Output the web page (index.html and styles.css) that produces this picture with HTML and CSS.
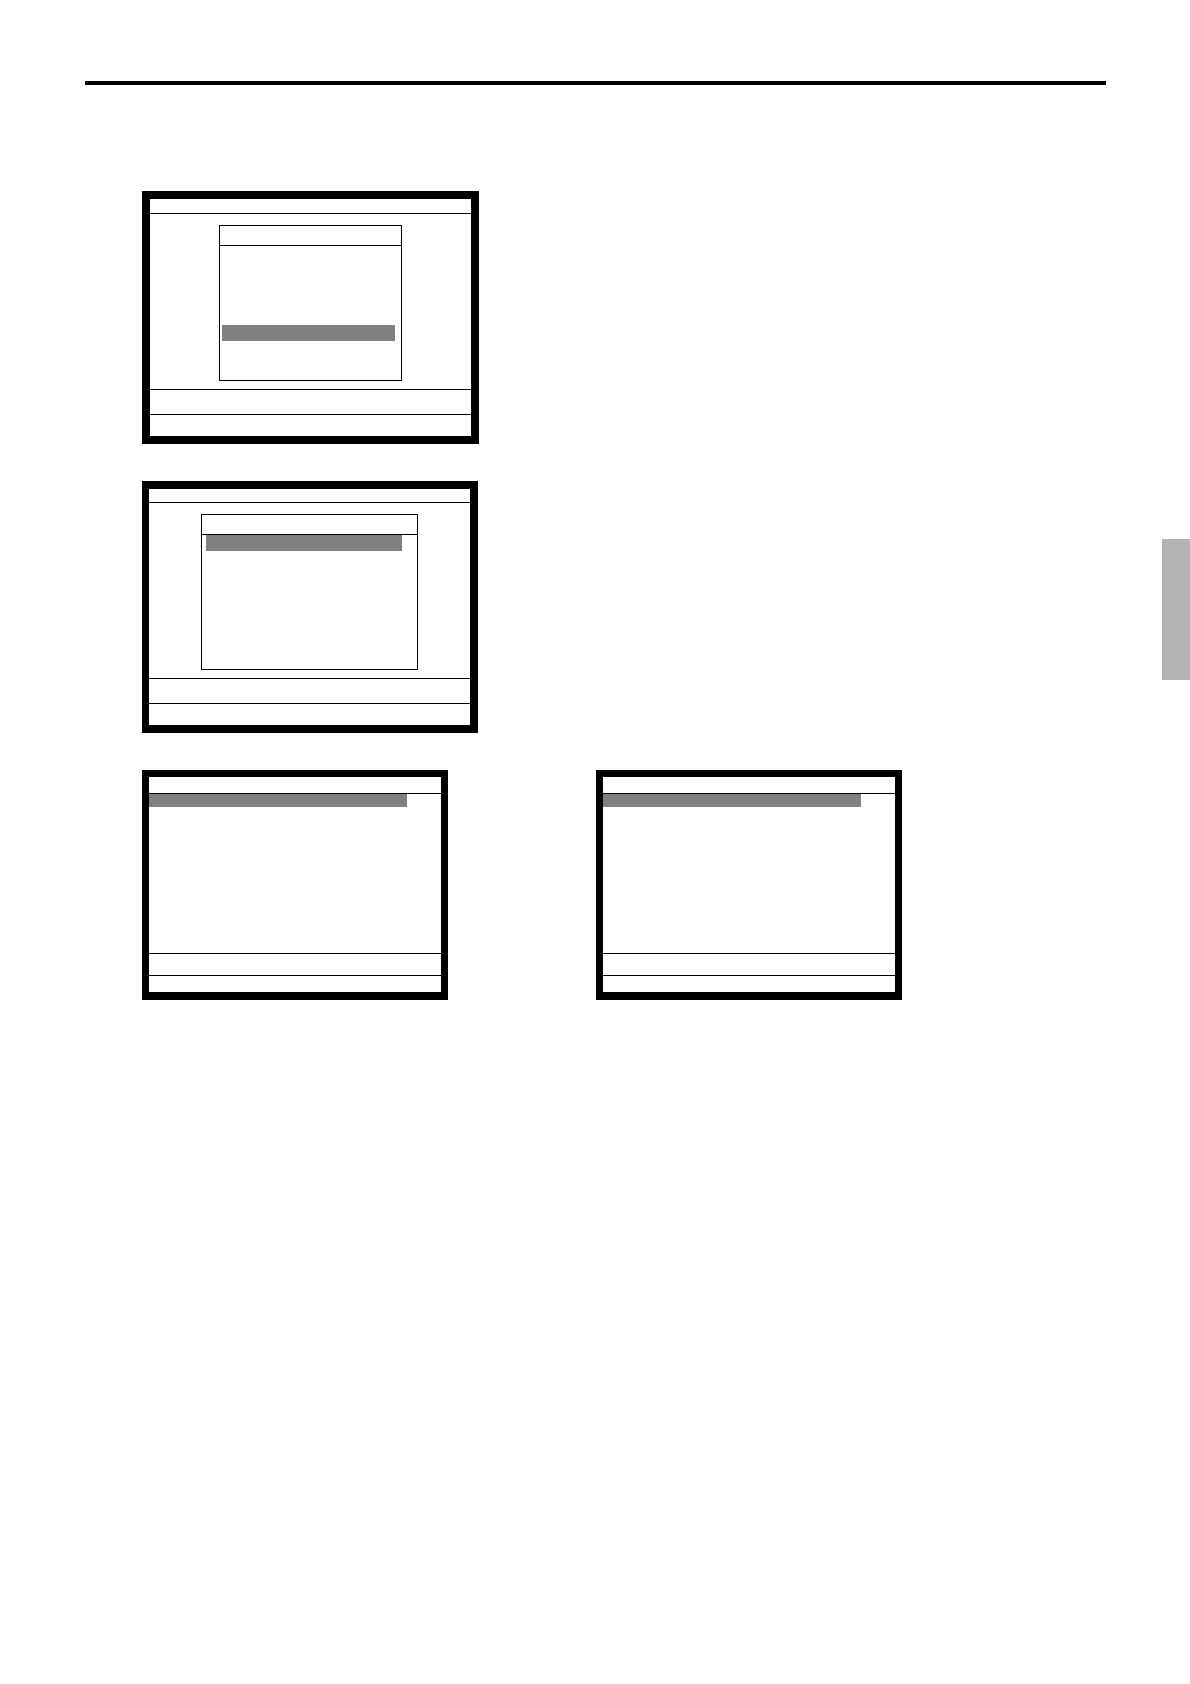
FILE: index.html
```html
<!DOCTYPE html>
<html lang="en">
<head>
  <meta charset="utf-8">
  <meta name="viewport" content="width=device-width, initial-scale=1">
  <title>Terminal screens</title>
  <link rel="stylesheet" href="styles.css">
</head>
<body>
  <div class="page">
    <main class="content">
      <hr class="rule">
      <div class="figures">
        <section class="screen screen-large">
          <header class="screen-title"></header>
          <div class="screen-body">
            <div class="dialog">
              <div class="dialog-title"></div>
              <div class="dialog-list dialog-list-lower">
                <div class="highlight"></div>
              </div>
            </div>
          </div>
          <div class="screen-message"></div>
          <footer class="screen-keys"></footer>
        </section>

        <section class="screen screen-large screen-options">
          <header class="screen-title"></header>
          <div class="screen-body">
            <div class="dialog dialog-wide">
              <div class="dialog-title"></div>
              <div class="dialog-list dialog-list-top">
                <div class="highlight"></div>
              </div>
            </div>
          </div>
          <div class="screen-message"></div>
          <footer class="screen-keys"></footer>
        </section>

        <div class="figure-row">
          <section class="screen screen-small">
            <header class="screen-title"></header>
            <div class="screen-body">
              <div class="highlight"></div>
            </div>
            <div class="screen-message"></div>
            <footer class="screen-keys"></footer>
          </section>

          <section class="screen screen-small">
            <header class="screen-title"></header>
            <div class="screen-body">
              <div class="highlight"></div>
            </div>
            <div class="screen-message"></div>
            <footer class="screen-keys"></footer>
          </section>
        </div>
      </div>
    </main>
    <aside class="tab-column">
      <div class="chapter-tab"></div>
    </aside>
  </div>
</body>
</html>
```
FILE: styles.css
```css
* {
  box-sizing: border-box;
}

body {
  margin: 0;
  background: #fff;
  color: #000;
  font-family: "Liberation Sans", sans-serif;
}

.page {
  display: grid;
  grid-template-columns: minmax(0, 1fr) 28px;
  min-height: 100vh;
}

.content {
  padding-top: 81px;
}

.rule {
  height: 4px;
  margin: 0 56px 0 85px;
  border: 0;
  background: #000;
}

.figures {
  display: flex;
  flex-direction: column;
  align-items: flex-start;
  gap: 37px;
  padding: 106px 56px 0 142px;
}

.figure-row {
  display: flex;
  flex-wrap: wrap;
  gap: 37px 148px;
}

/* Terminal screen: title strip, work area, message line, key line */
.screen {
  display: flex;
  flex-direction: column;
  max-width: 100%;
  border: 8px solid #000;
}

.screen-title {
  height: 15px;
  border-bottom: 1px solid #000;
}

.screen-message,
.screen-keys {
  border-top: 1px solid #000;
}

.highlight {
  height: 16px;
  background: #808080;
}

.screen-large {
  width: 337px;
}

.screen-large .screen-body {
  display: flex;
  justify-content: center;
  padding: 11px 0 8px;
}

.screen-large .screen-message {
  height: 25px;
}

.screen-large .screen-keys {
  height: 22px;
}

.screen-options {
  width: 336px;
  border-left-width: 7px;
}

.screen-options .screen-title {
  height: 14px;
}

.screen-small {
  width: 306px;
  border-width: 7px 7px 8px;
}

.screen-small .screen-title {
  height: 17px;
}

.screen-small .screen-body {
  height: 159px;
  padding-right: 34px;
}

.screen-small .highlight {
  height: 13px;
}

.screen-small .screen-message {
  height: 22px;
}

.screen-small .screen-keys {
  height: 17px;
}

/* Pop-up window inside a large screen */
.dialog {
  width: 183px;
  height: 156px;
  border: 1px solid #000;
}

.dialog-wide {
  width: 217px;
}

.dialog-title {
  height: 20px;
  border-bottom: 1px solid #000;
}

.dialog-list-lower {
  padding: 79px 6px 0 2px;
}

.dialog-list-top {
  padding: 0 15px 0 4px;
}

.tab-column {
  padding-top: 539px;
}

.chapter-tab {
  height: 141px;
  background: #b3b3b3;
}
```
